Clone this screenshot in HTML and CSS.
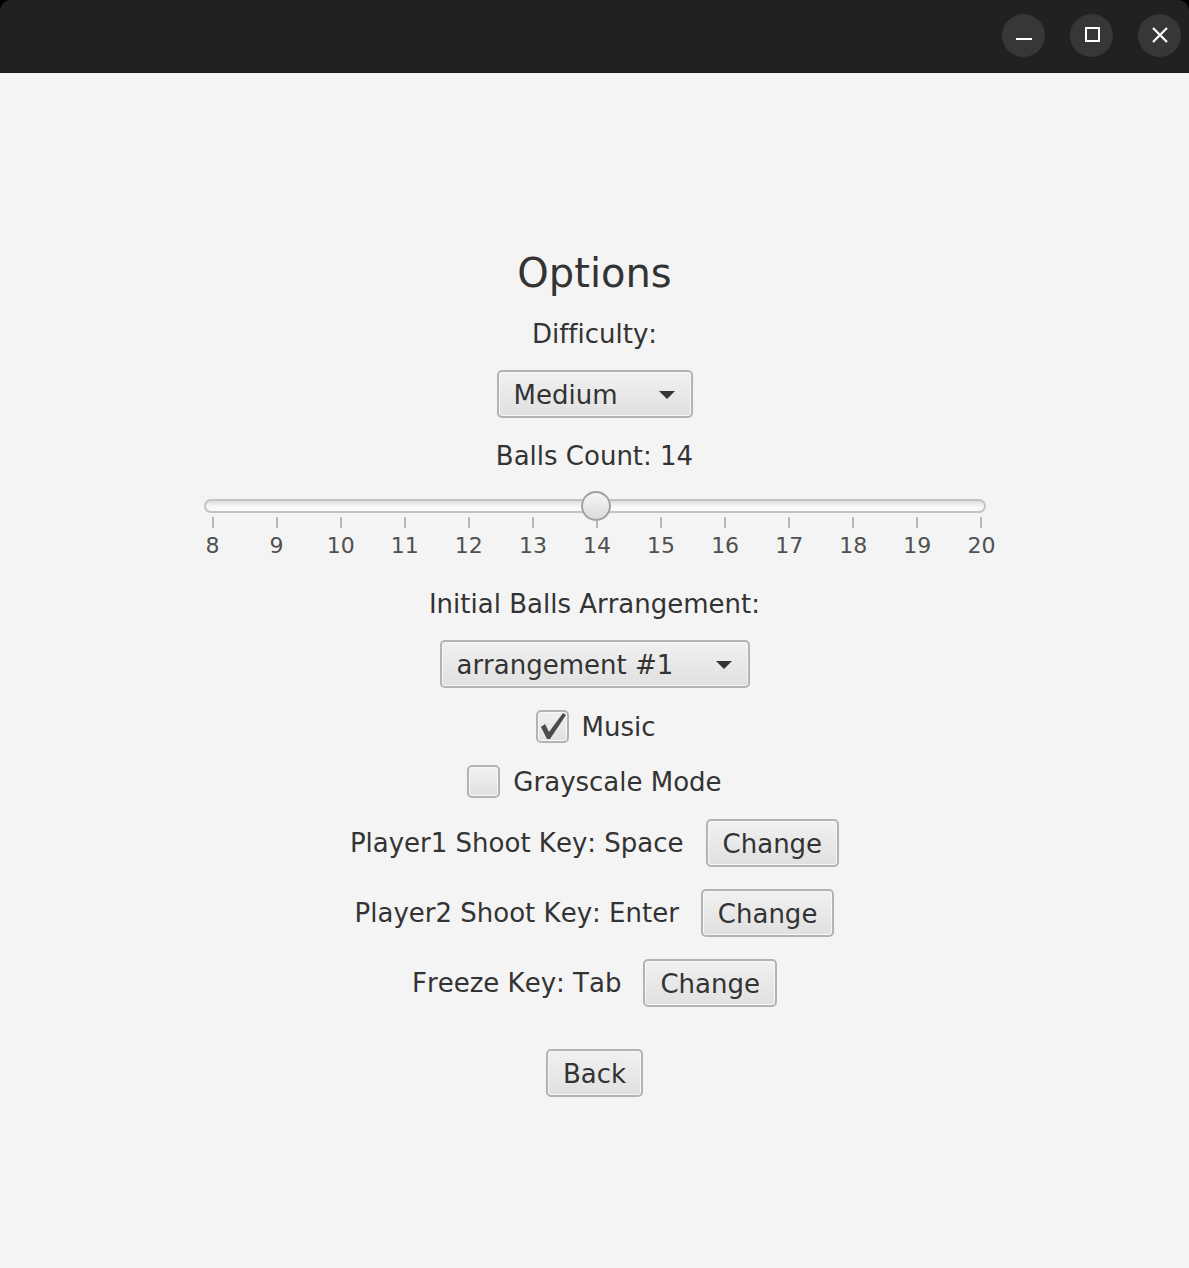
FILE: index.html
```html
<!DOCTYPE html>
<html lang="en">
<head>
<meta charset="utf-8">
<title>Options</title>
<link rel="stylesheet" href="styles.css">
</head>
<body>
<div class="window">
  <header class="titlebar">
    <div class="win-controls">
      <button class="win-btn" aria-label="Minimize">
        <svg width="18" height="18" viewBox="0 0 18 18"><rect x="1" y="11" width="16" height="2" fill="#fff"/></svg>
      </button>
      <button class="win-btn" aria-label="Maximize">
        <svg width="18" height="18" viewBox="0 0 18 18"><rect x="3" y="1" width="13" height="13" fill="none" stroke="#fff" stroke-width="2"/></svg>
      </button>
      <button class="win-btn" aria-label="Close">
        <svg width="18" height="18" viewBox="0 0 18 18"><path d="M2 1 L16 15 M16 1 L2 15" stroke="#fff" stroke-width="2.2" fill="none"/></svg>
      </button>
    </div>
  </header>

  <main class="options">
    <h1 class="title">Options</h1>
    <div class="label">Difficulty:</div>
    <div class="combo combo-difficulty">
      <span>Medium</span>
      <span class="arrow"></span>
    </div>
    <div class="label balls-label">Balls Count: 14</div>
    <div class="slider">
      <div class="rail">
        <div class="track"></div>
        <div class="thumb"></div>
      </div>
      <div class="ticks">
        <div class="tick"><span class="mark"></span><span class="num">8</span></div>
        <div class="tick"><span class="mark"></span><span class="num">9</span></div>
        <div class="tick"><span class="mark"></span><span class="num">10</span></div>
        <div class="tick"><span class="mark"></span><span class="num">11</span></div>
        <div class="tick"><span class="mark"></span><span class="num">12</span></div>
        <div class="tick"><span class="mark"></span><span class="num">13</span></div>
        <div class="tick"><span class="mark"></span><span class="num">14</span></div>
        <div class="tick"><span class="mark"></span><span class="num">15</span></div>
        <div class="tick"><span class="mark"></span><span class="num">16</span></div>
        <div class="tick"><span class="mark"></span><span class="num">17</span></div>
        <div class="tick"><span class="mark"></span><span class="num">18</span></div>
        <div class="tick"><span class="mark"></span><span class="num">19</span></div>
        <div class="tick"><span class="mark"></span><span class="num">20</span></div>
      </div>
    </div>
    <div class="label arrangement-label">Initial Balls Arrangement:</div>
    <div class="combo combo-arrangement">
      <span>arrangement #1</span>
      <span class="arrow"></span>
    </div>
    <label class="check-row music-row">
      <span class="box">
        <svg width="33" height="33" viewBox="0 0 33 33"><polygon points="5,17 9,14 13,22 27,3 30,5 14,29 11,29" fill="#4b4b4b"/></svg>
      </span>
      <span>Music</span>
    </label>
    <label class="check-row gray-row">
      <span class="box"></span>
      <span>Grayscale Mode</span>
    </label>
    <div class="key-row first-key">
      <span>Player1 Shoot Key: Space</span>
      <button class="btn">Change</button>
    </div>
    <div class="key-row">
      <span>Player2 Shoot Key: Enter</span>
      <button class="btn">Change</button>
    </div>
    <div class="key-row">
      <span>Freeze Key: Tab</span>
      <button class="btn">Change</button>
    </div>
    <button class="btn back">Back</button>
  </main>
</div>
</body>
</html>
```

FILE: styles.css
```css
* { box-sizing: border-box; }

html, body {
  margin: 0;
  padding: 0;
  background: #f4f4f4;
}

body {
  font-family: "DejaVu Sans", "Liberation Sans", sans-serif;
  font-kerning: none;
  font-variant-ligatures: none;
  color: #333333;
  width: 1189px;
  height: 1268px;
  overflow: hidden;
}

.window {
  background: #000;
  min-height: 1268px;
}

.titlebar {
  height: 73px;
  background: #212121;
  border-radius: 11px 11px 0 0;
  border-bottom: 1px solid #1a1a1a;
  display: flex;
  justify-content: flex-end;
  align-items: center;
}

.win-controls {
  display: flex;
  gap: 25px;
  padding-right: 8px;
  margin-top: -1px;
}

.win-btn {
  width: 43px;
  height: 43px;
  border-radius: 50%;
  border: none;
  background: #373737;
  padding: 0;
  display: flex;
  align-items: center;
  justify-content: center;
}

.options {
  background: #f4f4f4;
  min-height: 1195px;
  display: flex;
  flex-direction: column;
  align-items: center;
  padding-top: 175px;
  gap: 20px;
}

.title {
  margin: 0;
  font-size: 40px;
  font-weight: normal;
  line-height: 50px;
  height: 50px;
}

.label {
  font-size: 26px;
  line-height: 32px;
  height: 32px;
}

.balls-label { margin-top: 2px; }
.arrangement-label { margin-top: 8px; }

.combo {
  height: 48px;
  display: flex;
  align-items: center;
  justify-content: space-between;
  padding: 1px 16px 0 15px;
  font-size: 26px;
  border: 2px solid #b3b3b3;
  border-radius: 5px;
  background: linear-gradient(to bottom, #f1f1f1, #e0e0e0);
  box-shadow: inset 0 0 0 1px #f7f7f7;
}

.combo-difficulty { width: 196px; }
.combo-arrangement { width: 310px; }

.arrow {
  width: 0;
  height: 0;
  border-left: 8px solid transparent;
  border-right: 8px solid transparent;
  border-top: 8px solid #333;
  margin-top: 1px;
}

.slider {
  width: 782px;
  margin-top: -1px;
}

.rail {
  position: relative;
  height: 26px;
  padding-top: 8px;
}

.track {
  height: 14px;
  border-radius: 7px;
  border: 2px solid #c3c3c3;
  background: linear-gradient(to bottom, #dedede, #f8f8f8 60%, #fbfbfb);
}

.thumb {
  position: absolute;
  left: 377px;
  top: 0;
  width: 30px;
  height: 30px;
  border-radius: 50%;
  border: 2px solid #a2a2a2;
  background: linear-gradient(to bottom, #f5f5f5, #dcdcdc);
}

.ticks {
  display: flex;
  justify-content: space-between;
  padding: 0 3px 0 8px;
}

.tick {
  width: 2px;
  display: flex;
  flex-direction: column;
  align-items: center;
}

.mark {
  display: block;
  width: 2px;
  height: 11px;
  background: #b9b9b9;
  margin-bottom: 4px;
}

.num {
  font-size: 22px;
  line-height: 28px;
  color: #505050;
  white-space: nowrap;
}

.check-row {
  display: flex;
  align-items: center;
  gap: 13px;
  font-size: 26px;
  height: 33px;
  margin-top: 2px;
}

.music-row { margin-left: 2px; }

.box {
  width: 33px;
  height: 33px;
  border: 2px solid #b3b3b3;
  border-radius: 5px;
  background: linear-gradient(to bottom, #f1f1f1, #e0e0e0);
  box-shadow: inset 0 0 0 1px #f7f7f7;
  position: relative;
  display: block;
}

.box svg {
  position: absolute;
  left: -2px;
  top: -2px;
}

.key-row {
  display: flex;
  align-items: center;
  gap: 22px;
  font-size: 26px;
  margin-top: 2px;
}

.first-key { margin-top: 1px; }

.btn {
  height: 48px;
  font-family: inherit;
  font-kerning: none;
  font-size: 26px;
  color: #333;
  padding: 1px 15px 0;
  border: 2px solid #b3b3b3;
  border-radius: 5px;
  background: linear-gradient(to bottom, #f1f1f1, #e0e0e0);
  box-shadow: inset 0 0 0 1px #f7f7f7;
}

.back {
  margin-top: 22px;
}
```
